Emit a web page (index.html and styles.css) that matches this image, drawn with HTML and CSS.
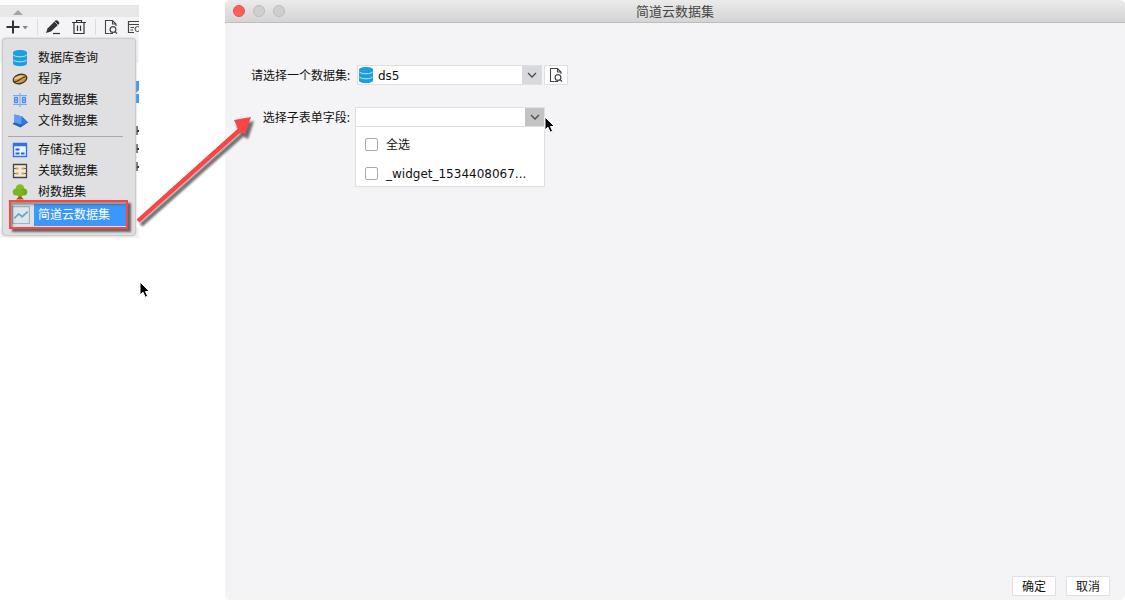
FILE: index.html
```
<!DOCTYPE html>
<html lang="zh-CN">
<head>
<meta charset="utf-8">
<title>简道云数据集</title>
<link rel="stylesheet" href="styles.css">
</head>
<body>
<svg class="defs" aria-hidden="true">
  <symbol id="db" viewBox="0 0 16 18">
    <path d="M1 3.500C1 0 15 0 15 3.500V14.500C15 18 1 18 1 14.500Z" fill="#1c9fe0"/>
    <path d="M1 5.500C2 8.500 14 8.500 15 5.500M1 10.500C2 13.500 14 13.500 15 10.500" fill="none" stroke="#c4e6f7" stroke-width="1"/>
  </symbol>
  <symbol id="preview" viewBox="0 0 16 16">
    <path d="M6.500 14.500H2.500V1.500H9.500L13 5V7M9.500 1.500V5H13" fill="none" stroke="#444" stroke-width="1.100"/>
    <circle cx="10" cy="10.500" r="2.900" fill="none" stroke="#444" stroke-width="1.200"/>
    <path d="M12 12.500L14 14.500M6.500 14.500H10" stroke="#444" stroke-width="1.200"/>
  </symbol>
  <symbol id="chev" viewBox="0 0 10 10">
    <path d="M1 3L5 7L9 3" fill="none" stroke="#4a4a4a" stroke-width="1.300"/>
  </symbol>
  <symbol id="cursor" viewBox="0 0 12 18">
    <path d="M1 1V14L4 11.200L6.200 16.200L8.600 15.200L6.500 10.500H10.500Z" fill="#000" stroke="#fff" stroke-width="1"/>
  </symbol>
</svg>

<aside class="side">
  <div class="grip"><svg width="10" height="5" viewBox="0 0 10 5"><path d="M0 5L5 0L10 5Z" fill="#a4a4a4"/></svg></div>
  <div class="toolbar">
    <button class="tool add" aria-label="添加"><svg width="24" height="16" viewBox="0 0 24 16"><path d="M8 1.500V14.500M1.500 8H14.500" stroke="#333" stroke-width="2"/><path d="M17.500 7H23L20.200 10.500Z" fill="#888"/></svg></button>
    <span class="rule"></span>
    <button class="tool" aria-label="编辑"><svg width="16" height="16" viewBox="0 0 16 16"><path d="M1 14L2.500 9.500L10.500 1.500Q11.500 .8 12.500 1.500L14 3Q14.800 4 14 5L6 12.500Z" fill="#333"/><path d="M9.500 2.500L13 6" stroke="#f4f4f6" stroke-width=".7"/><path d="M8 14.500H15" stroke="#333" stroke-width="1.200"/></svg></button>
    <button class="tool" aria-label="删除"><svg width="16" height="16" viewBox="0 0 16 16"><path d="M1 3.500H15M5.500 3V1.500H10.500V3M3 4V14.500H13V4M6.500 6.500V12M9.500 6.500V12" fill="none" stroke="#333" stroke-width="1.200"/></svg></button>
    <span class="rule"></span>
    <button class="tool" aria-label="预览"><svg width="16" height="16"><use href="#preview"/></svg></button>
    <button class="tool last" aria-label="查看"><svg width="16" height="16" viewBox="0 0 16 16"><path d="M7 13.500H1.500V2.500H14.500V7M1.500 5.500H14M3.500 8.500H7M3.500 11H6" fill="none" stroke="#444" stroke-width="1.200"/><circle cx="10.500" cy="10" r="2.500" fill="none" stroke="#444"/></svg></button>
  </div>
  <div class="panel">
    <svg class="edge" width="3" height="100" viewBox="0 0 3 100" aria-hidden="true"><path d="M0 8H3V30H0Z" fill="#3b97fc"/><path d="M0 20L3 17V21H0Z" fill="#fff"/><path d="M1 53V62M1 71V80M1 89V98" stroke="#777" stroke-width="2"/><path d="M1 58H3M1 76H3M1 94H3" stroke="#333" stroke-width="2"/></svg>
    <nav class="menu">
      <button class="item"><svg class="ico db" viewBox="0 0 16 18"><use href="#db"/></svg><span>数据库查询</span></button>
      <button class="item"><svg class="ico" viewBox="0 0 16 16"><g transform="rotate(-17 8 8)"><ellipse cx="8" cy="8" rx="7" ry="4.500" fill="#c99a4a" stroke="#3f2c12" stroke-width="1.200"/><ellipse cx="7" cy="6" rx="4.500" ry="1.300" fill="#e9c98b"/><path d="M2 9Q5 10 8 8.500T14 7.500" fill="none" stroke="#3f2c12" stroke-width="1"/></g></svg><span>程序</span></button>
      <button class="item"><svg class="ico" viewBox="0 0 16 16"><path d="M8 1V15M1 3.500H15M1 12.500H15" stroke="#72a9f7" stroke-width="1.100"/><path d="M2.500 5.500H5.500V10.500H2.500ZM2.500 8H5.500M10.500 5.500H13.500V10.500H10.500ZM10.500 8H13.500" fill="none" stroke="#4a8ff5" stroke-width="1.300"/></svg><span>内置数据集</span></button>
      <button class="item"><svg class="ico" viewBox="0 0 16 16"><path d="M.5 11L2.500 9V1.500L10 3.500L16 9.500L8.500 14.500Z" fill="#2364c8"/><path d="M2.500 1.500L10 3.500L9.500 11.500L2.500 9.500Z" fill="#5ba0f2"/><path d="M10 3.500L16 9.500L9.500 12Z" fill="#3478dc"/></svg><span>文件数据集</span></button>
      <hr>
      <button class="item"><svg class="ico" viewBox="0 0 16 16"><path d="M1.500 1.500H14.500V14.500H1.500Z" fill="#eef4ff" stroke="#3272e6" stroke-width="1.400"/><path d="M1 3H15" stroke="#3272e6" stroke-width="2.500"/><path d="M3.500 7.500H7.500M3.500 11.500H7.500M9 11.500H12.500" stroke="#2464e0" stroke-width="2"/></svg><span>存储过程</span></button>
      <button class="item"><svg class="ico" viewBox="0 0 16 16"><path d="M1.500 1.500H14.500V14.500H1.500Z" fill="#ececec" stroke="#454545" stroke-width="1.300"/><path d="M1 5.500H6M10 5.500H15M1 10.500H6M10 10.500H15" stroke="#555"/><path d="M3.500 5.500H6.500M9.500 5.500H12.500M3.500 10.500H6.500M9.500 10.500H12.500" stroke="#f39b1f" stroke-width="1.800"/></svg><span>关联数据集</span></button>
      <button class="item"><svg class="ico" viewBox="0 0 16 16"><path d="M7 8H9L9.500 13L12 15.500H4L6.500 13Z" fill="#a0561f"/><circle cx="8" cy="4.500" r="4.300" fill="#84bc22"/><circle cx="4.300" cy="8" r="3.600" fill="#7cb41e"/><circle cx="11.700" cy="8" r="3.600" fill="#73ac1a"/><circle cx="8" cy="9" r="3.500" fill="#7cb41e"/></svg><span>树数据集</span></button>
      <button class="item picked"><svg class="ico" viewBox="0 0 16 16"><path d="M.5 .5H15.500V15.500H.5Z" fill="#dfe5e8" stroke="#8db9c8"/><path d="M2 11L6 7L9 9.500L14 5" fill="none" stroke="#68aac8" stroke-width="1.600"/></svg><span>简道云数据集</span></button>
      <div class="mark"></div>
    </nav>
  </div>
</aside>

<main class="dialog">
  <header class="titlebar">
    <div class="lights"><button class="light close" aria-label="关闭"></button><button class="light" aria-label="最小化"></button><button class="light" aria-label="最大化"></button></div>
    <h1>简道云数据集</h1>
  </header>
  <form class="form">
    <div class="row">
      <label for="ds">请选择一个数据集:</label>
      <div class="combo source">
        <svg class="combo-ico" viewBox="0 0 16 18"><use href="#db"/></svg>
        <select id="ds"><option>ds5</option></select>
        <span class="arrow"><svg width="10" height="10"><use href="#chev"/></svg></span>
      </div>
      <button type="button" class="preview" aria-label="预览"><svg width="16" height="16"><use href="#preview"/></svg></button>
    </div>
    <div class="row">
      <label class="second" for="field">选择子表单字段:</label>
      <div class="combo field">
        <input id="field" type="text">
        <button type="button" class="arrow pressed" aria-label="展开"><svg width="10" height="10"><use href="#chev"/></svg></button>
        <div class="options">
          <label><input type="checkbox"><span>全选</span></label>
          <label><input type="checkbox"><span>_widget_1534408067...</span></label>
        </div>
      </div>
    </div>
  </form>
  <footer class="actions"><button>确定</button><button>取消</button></footer>
</main>

<svg class="callout" width="130" height="120" viewBox="0 0 130 120" aria-hidden="true">
  <defs><filter id="soft" x="-20%" y="-20%" width="140%" height="140%"><feGaussianBlur stdDeviation="1"/></filter></defs>
  <path d="M6.500 109.500L107.500 19.500L103 11L121 7L115 25L110.500 22.500L9.500 112.500Z" transform="translate(3 4)" fill="#555" filter="url(#soft)" opacity=".85"/>
  <path d="M6.500 109.500L108 18.500L104 10L121 7L115 24L110.500 22.500L9.500 112.500Z" fill="#fb4444"/>
</svg>
<svg class="cursor first" width="12" height="18"><use href="#cursor"/></svg>
<svg class="cursor second-cursor" width="12" height="18"><use href="#cursor"/></svg>
</body>
</html>
```

FILE: styles.css
```
* { box-sizing: border-box; }
body {
  margin: 0;
  min-height: 100vh;
  display: flex;
  gap: 86px;
  position: relative;
  background: #fff;
  color: #111;
  font: 12px/20px "Noto Sans", "Noto Sans CJK SC", sans-serif;
}
button, input, select { font: inherit; color: inherit; margin: 0; padding: 0; }
button { border: 0; background: none; }
svg { display: block; flex: none; }
.defs { position: absolute; width: 0; height: 0; }

.side { width: 139px; flex: none; padding-top: 5px; }
.grip { height: 12px; padding: 5px 0 0 13px; background: #e8e8e8; }
.toolbar {
  height: 21px;
  display: flex;
  align-items: center;
  gap: 8px;
  padding: 0 0 2px 5px;
  overflow: hidden;
  background: #f4f4f6;
}
.tool { flex: none; }
.tool + .tool { margin-left: 2px; }
.tool.last { margin-left: 0; }
.rule { width: 1px; height: 16px; flex: none; background: #dcdcdc; }
.rule + .tool { margin-left: -1px; }
.panel {
  position: relative;
  padding: 0 3px 2px 2px;
  background: linear-gradient(#f4f4f6 25px, #fff 25px, #fff 190px, #f4f4f6 190px);
}
.edge { position: absolute; right: 0; top: 35px; }
.menu {
  position: relative;
  padding: 8px 0 9px;
  background: #e0e0e2;
  border: 1px solid #cbcbcd;
  border-radius: 4px;
  box-shadow: 0 0 2px #bbb;
}
.item {
  width: 100%;
  height: 21px;
  display: flex;
  align-items: center;
  gap: 6px;
  padding-left: 9px;
  text-align: left;
}
.item span { padding-left: 4px; }
.ico { width: 16px; height: 16px; }
.ico.db { height: 18px; }
.menu hr { height: 1px; margin: 5px 12px 2px 5px; border: 0; background: #a8a8aa; }
.item.picked { height: 22px; margin-top: 2px; padding-right: 8px; gap: 4px; }
.picked .ico { width: 18px; height: 18px; }
.item.picked span { flex: 1; height: 22px; line-height: 22px; background: #3b97fc; color: #fff; }
.mark {
  position: absolute;
  left: 6px;
  right: 7px;
  bottom: 6px;
  height: 29px;
  border: 2px solid #fb4444;
  box-shadow: 3px 3px 2px #666, inset 2px 3px 2px #5558;
}

.dialog {
  flex: 1;
  min-width: 0;
  display: flex;
  flex-direction: column;
  margin-bottom: 1px;
  background: #f4f4f6;
  border-radius: 5px;
}
.titlebar {
  height: 23px;
  display: grid;
  grid-template-columns: 1fr auto 1fr;
  align-items: center;
  padding: 0 8px;
  background: linear-gradient(#ebebeb, #d4d4d4);
  border-bottom: 1px solid #bdbdbd;
  border-radius: 5px 5px 0 0;
}
.titlebar h1 { margin: 0; font-size: 13px; font-weight: 400; line-height: 20px; color: #444; }
.lights { display: flex; gap: 8px; }
.light { width: 12px; height: 12px; border: 1px solid #bcbcbc; border-radius: 50%; background: #cfcfcf; }
.light.close { background: #ff5f57; border-color: #ee5048; }
.form { flex: 1; padding: 42px 26px 0; display: flex; flex-direction: column; gap: 22px; }
.row { display: flex; align-items: center; height: 20px; }
.row > label { width: 99px; flex: none; line-height: 22px; padding-top: 2px; text-align: right; white-space: nowrap; }
.combo { position: relative; height: 20px; display: flex; background: #fff; border: 1px solid #dfdfe1; }
.source { width: 185px; margin-left: 7px; }
.field { width: 190px; margin-left: 5px; }
.combo select, .combo > input { flex: 1; min-width: 0; border: 0; background: none; outline: 0; appearance: none; }
.combo select { padding: 2px 0 0 20px; font: 12px/16px "DejaVu Sans", "Noto Sans CJK SC", sans-serif; }
.combo-ico { position: absolute; left: 0; top: 0; width: 16px; height: 18px; }
.arrow { width: 19px; display: grid; place-items: center; background: #d8d9de; }
.arrow.pressed { background: #c3c3c3; }
.source .arrow { pointer-events: none; }
.preview { width: 24px; height: 20px; margin-left: 2px; display: grid; place-items: center; background: #fff; border: 1px solid #dfdfe1; }
.options {
  position: absolute;
  top: 100%;
  left: -1px;
  right: -1px;
  display: grid;
  gap: 3px;
  padding: 4px 9px 0;
  background: #fff;
  border: 1px solid #dfdfe1;
  font-family: "DejaVu Sans", "Noto Sans CJK SC", sans-serif;
}
.options label { height: 26px; display: flex; align-items: center; gap: 8px; white-space: nowrap; }
.options span { padding-top: 2px; }
.options input { width: 13px; height: 13px; flex: none; appearance: none; background: #fff; border: 1px solid #aaa; border-radius: 2px; }
.actions { display: flex; justify-content: flex-end; gap: 10px; padding: 0 15px 4px; }
.actions button { width: 44px; height: 20px; padding-top: 2px; line-height: 16px; background: #fff; border: 1px solid #dfdfe1; border-radius: 1px; }

.callout { position: absolute; left: 130px; top: 110px; pointer-events: none; }
.cursor { position: absolute; pointer-events: none; }
.first { left: 139px; top: 281px; }
.second-cursor { left: 544px; top: 116px; }
```
